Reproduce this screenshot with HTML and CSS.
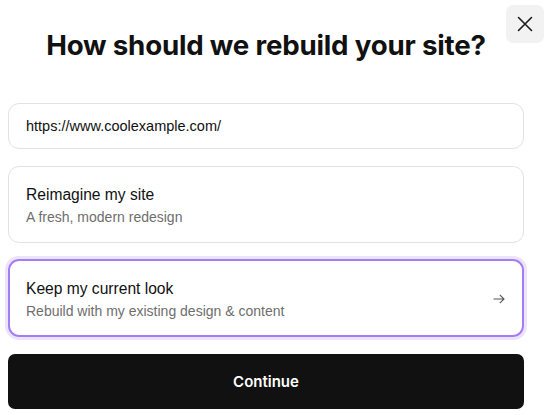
FILE: index.html
```html
<!DOCTYPE html>
<html>
<head>
<meta charset="utf-8">
<link rel="stylesheet" href="styles.css">
</head>
<body>
<div class="modal">
  <button class="close" aria-label="Close">
    <svg width="16" height="16" viewBox="0 0 16 16"><path d="M1.5 1.5 L14.5 14.5 M14.5 1.5 L1.5 14.5" stroke="#1a1a1a" stroke-width="1.6" fill="none" stroke-linecap="round"/></svg>
  </button>
  <h1 class="title">How should we rebuild your site?</h1>
  <div class="stack">
    <div class="field">https://www.coolexample.com/</div>
    <div class="option">
      <div class="option-text">
        <div class="option-title">Reimagine my site</div>
        <div class="option-sub">A fresh, modern redesign</div>
      </div>
    </div>
    <div class="option selected">
      <div class="option-text">
        <div class="option-title">Keep my current look</div>
        <div class="option-sub">Rebuild with my existing design &amp; content</div>
      </div>
      <svg class="arrow" width="12" height="10" viewBox="0 0 12 10"><path d="M0.5 5 H11 M6.8 0.8 L11 5 L6.8 9.2" stroke="#555" stroke-width="1.1" fill="none"/></svg>
    </div>
    <button class="continue">Continue</button>
  </div>
</div>
</body>
</html>
```
FILE: styles.css
```css
* { box-sizing: border-box; }
html, body { margin: 0; padding: 0; background: #fff; }
body { font-family: "Liberation Sans", Arial, sans-serif; color: #111; }
.modal { position: relative; width: 550px; height: 415px; padding: 0 26px 0 8px; }
.close {
  position: absolute; top: 5px; left: 506px; width: 38px; height: 38px;
  border: none; border-radius: 7px; background: #f2f2f2;
  display: flex; align-items: center; justify-content: center; padding: 0; cursor: pointer;
}
.title {
  margin: 0; padding-top: 27px; height: 103px;
  font-family: "Inter", sans-serif; font-weight: 700; font-size: 27.7px; line-height: 36px;
  text-align: center; letter-spacing: -0.2px; color: #111;
}
.stack { display: flex; flex-direction: column; gap: 17px; }
.field {
  height: 46px; border: 1px solid #e2e2e2; border-radius: 11px;
  padding: 0 17px; display: flex; align-items: center;
  font-size: 14.5px; color: #111;
}
.option {
  height: 77px; border: 1px solid #e2e2e2; border-radius: 11px;
  padding: 2px 17px 0; display: flex; align-items: center; justify-content: space-between;
}
.option.selected {
  height: 78px; margin-top: -1px; border: 2px solid #a47cf3; padding: 2px 16px 0;
  box-shadow: 0 0 0 3px #ece3fd;
}
.option-title { font-size: 15.6px; color: #111; line-height: 20px; }
.option-sub { font-size: 14px; color: #6e6e6e; margin-top: 3px; line-height: 18px; }
.arrow { margin-right: 1px; }
.continue {
  height: 55px; border: none; border-radius: 7px; background: #111; color: #fff;
  font-family: "Inter", sans-serif; font-weight: 600; font-size: 15px; cursor: pointer;
}
```
